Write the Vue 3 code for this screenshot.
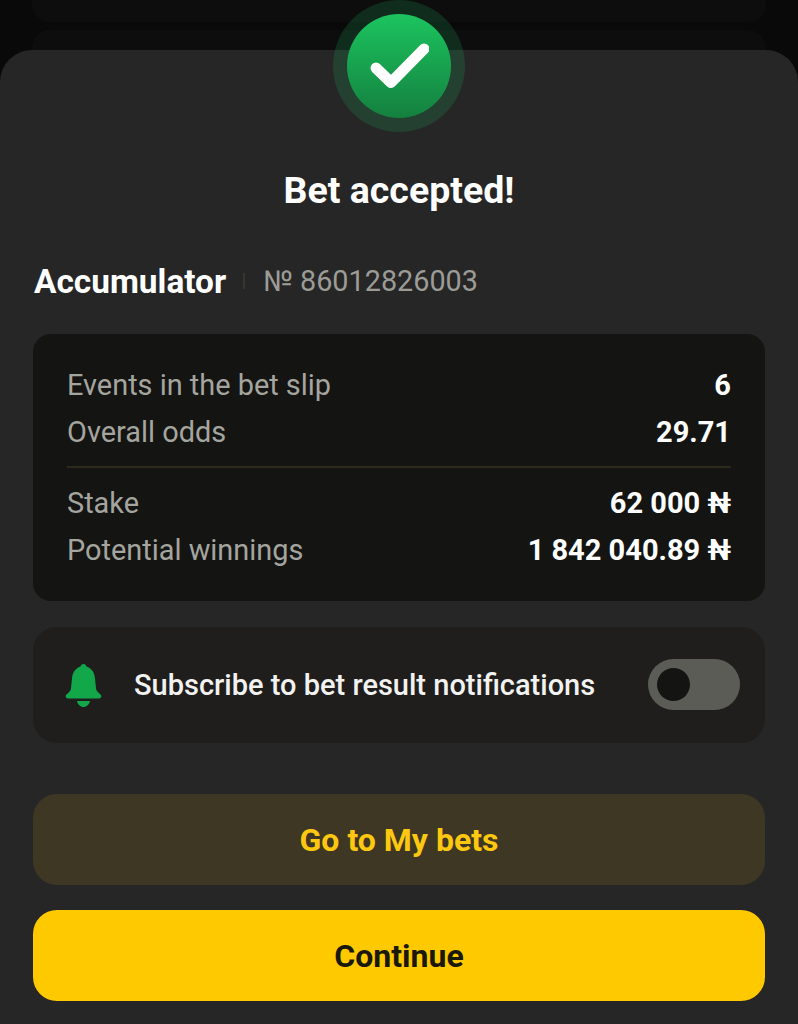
<template>
  <div class="page">
    <div class="backdrop">
      <div class="prev-card prev-card-top"></div>
      <div class="prev-card prev-card-next"></div>
    </div>

    <div class="sheet">
      <div class="badge">
        <div class="badge-circle">
          <svg width="60" height="46" viewBox="0 0 60 46" fill="none">
            <path d="M7 25 L22 39.500 L55 6" stroke="#fff" stroke-width="11" stroke-linecap="round" stroke-linejoin="round" />
          </svg>
        </div>
      </div>

      <h1 class="title">Bet accepted!</h1>

      <div class="bet-head">
        <span class="bet-type">Accumulator</span>
        <span class="bet-sep"></span>
        <span class="bet-number">№ 86012826003</span>
      </div>

      <div class="summary">
        <div v-for="row in oddsRows" :key="row.label" class="summary-row">
          <span class="summary-label">{{ row.label }}</span>
          <span class="summary-value">{{ row.value }}</span>
        </div>
        <div class="summary-divider"></div>
        <div v-for="row in moneyRows" :key="row.label" class="summary-row">
          <span class="summary-label">{{ row.label }}</span>
          <span class="summary-value">{{ row.value }}</span>
        </div>
      </div>

      <div class="notify">
        <svg class="bell" width="37" height="43" viewBox="0 0 37 43" fill="#12a84a">
          <path d="M18.500 0c1.600 0 2.600 1 3 2.600C27 4.500 29.500 9 30 14.500l1 10c.3 2.300 2 4 4.500 6 1.600 1.300.8 4-1.500 4H3c-2.300 0-3.100-2.700-1.500-4 2.500-2 4.200-3.700 4.500-6l1-10C7.500 9 10 4.500 15.500 2.600 15.900 1 16.900 0 18.500 0z" />
          <path d="M12 37h13c-.8 3.500-3.400 6-6.500 6S12.800 40.500 12 37z" />
        </svg>
        <span class="notify-text">Subscribe to bet result notifications</span>
        <div class="toggle" :class="{ on: subscribed }" @click="subscribed = !subscribed">
          <div class="toggle-knob"></div>
        </div>
      </div>

      <button class="btn btn-secondary">Go to My bets</button>
      <button class="btn btn-primary">Continue</button>
    </div>
  </div>
</template>

<script setup>
import { ref } from 'vue'

const subscribed = ref(false)

const oddsRows = [
  { label: 'Events in the bet slip', value: '6' },
  { label: 'Overall odds', value: '29.71' }
]

const moneyRows = [
  { label: 'Stake', value: '62 000 ₦' },
  { label: 'Potential winnings', value: '1 842 040.89 ₦' }
]
</script>

<style>
html, body {
  margin: 0;
  background: #090909;
  overflow: hidden;
}
</style>

<style scoped>
.page {
  width: 798px;
  height: 1024px;
  overflow: hidden;
  background: #090909;
  font-family: Roboto, "Liberation Sans", sans-serif;
}
.backdrop {
  height: 50px;
  padding: 0 32px;
  overflow: hidden;
}
.prev-card {
  background: #0d0d0d;
}
.prev-card-top {
  height: 22px;
  border-radius: 0 0 18px 18px;
}
.prev-card-next {
  height: 40px;
  margin-top: 8px;
  border-radius: 18px 18px 0 0;
}
.sheet {
  position: relative;
  height: 974px;
  box-sizing: border-box;
  padding: 0 33px;
  background: #262626;
  border-radius: 32px 32px 0 0;
}
.badge {
  position: absolute;
  left: 333px;
  top: -50px;
  width: 132px;
  height: 132px;
  border-radius: 50%;
  background: rgba(28, 170, 90, 0.2);
  display: flex;
  align-items: center;
  justify-content: center;
}
.badge-circle {
  width: 104px;
  height: 104px;
  border-radius: 50%;
  background: linear-gradient(180deg, #1cc45f 0%, #14803f 100%);
  display: flex;
  align-items: center;
  justify-content: center;
}
.title {
  margin: 0;
  padding-top: 117px;
  font-size: 37.500px;
  line-height: 46px;
  font-weight: 700;
  color: #fff;
  text-align: center;
}
.bet-head {
  display: flex;
  align-items: center;
  margin-top: 45px;
  height: 46px;
}
.bet-type {
  font-size: 33.400px;
  font-weight: 700;
  color: #fff;
  margin-left: 1px;
}
.bet-sep {
  width: 2px;
  height: 16px;
  margin: 0 18px 0 17px;
  background: #37352c;
}
.bet-number {
  font-size: 28.800px;
  color: #9c9c97;
}
.summary {
  margin-top: 30px;
  height: 267px;
  box-sizing: border-box;
  padding: 27px 34px 0;
  background: #141413;
  border-radius: 18px;
}
.summary-row {
  display: flex;
  justify-content: space-between;
  align-items: center;
  height: 47px;
}
.summary-label {
  font-size: 28.900px;
  color: #a5a59f;
}
.summary-value {
  font-size: 29px;
  font-weight: 700;
  color: #fff;
}
.summary-divider {
  height: 2px;
  margin: 11px 0 11px;
  background: #2d2a1c;
}
.notify {
  display: flex;
  align-items: center;
  margin-top: 26px;
  height: 116px;
  box-sizing: border-box;
  padding: 0 25px 0 32px;
  background: #1f1e1d;
  border-radius: 24px;
}
.bell {
  flex: none;
}
.notify-text {
  flex: 1;
  margin-left: 32px;
  font-size: 29px;
  font-weight: 500;
  color: #f2f2f0;
}
.toggle {
  width: 92px;
  height: 51px;
  margin-bottom: 1px;
  box-sizing: border-box;
  padding: 9px;
  border-radius: 26px;
  background: #5c5c57;
  display: flex;
  align-items: center;
}
.toggle.on {
  justify-content: flex-end;
  background: #12a84a;
}
.toggle-knob {
  width: 33px;
  height: 33px;
  border-radius: 50%;
  background: #141413;
}
.btn {
  display: block;
  width: 100%;
  height: 91px;
  border: none;
  border-radius: 24px;
  font-family: inherit;
  font-size: 32px;
  font-weight: 700;
}
.btn-secondary {
  margin-top: 51px;
  background: #3d3724;
  color: #fdc80f;
}
.btn-primary {
  margin-top: 25px;
  background: #ffc900;
  color: #1a1808;
}
</style>
